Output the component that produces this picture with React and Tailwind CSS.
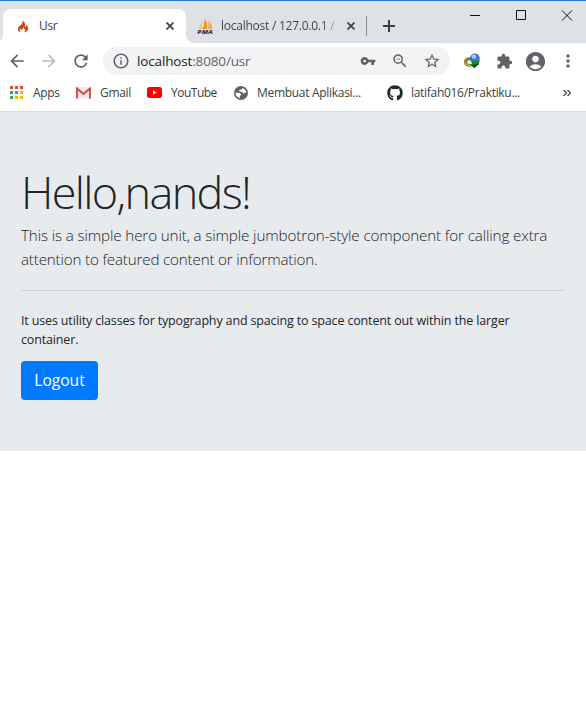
import { MdArrowBack, MdArrowForward, MdRefresh, MdInfoOutline, MdVpnKey, MdZoomOut, MdStarBorder, MdExtension, MdAccountCircle, MdMoreVert } from 'react-icons/md';
import { FaGithub } from 'react-icons/fa';

function Flame() {
  return (
    <svg viewBox="0 0 12 13" className="h-[13px] w-3 shrink-0">
      <path d="M5.400 0.500C6.200 2.800 4.800 4 3.400 5.600C1.900 6.300 1 7.500 0.900 9C0.800 10.800 2 12 3.800 12.500C2.500 11.200 2.500 9.600 4 8.200C3.800 9.600 4.600 10.200 5.400 9.600C6.200 8.900 5.600 8 6.100 7C6.500 8.500 8.300 9 8 10.700C7.800 11.700 7.200 12.100 6.600 12.500C9.500 12.200 11.400 10.200 11.100 8C10.900 6.700 10.100 6 9.900 4.800C9.100 5.400 9.300 6.200 8.900 6.800C8.700 7.100 8.100 7 8.100 6.500C8.300 4 8 1.800 5.400 0.500Z" fill="#cf4515" />
    </svg>
  );
}

function PmaLogo() {
  return (
    <svg viewBox="0 0 17 17" className="h-[17px] w-[17px] shrink-0">
      <path d="M4.900 2.500L4.600 11H0.800C2.800 8.500 4.200 6 4.900 2.500Z" fill="#f9bd72" />
      <path d="M7.300 0.800C10.300 4 10.600 8 9.800 11H5.200C7 8 7.800 4.500 7.300 0.800Z" fill="#f7941d" />
      <path d="M11.300 1.800C13.500 4.500 14.600 7.500 15.500 11H10.500C11.700 8 11.800 5 11.300 1.800Z" fill="#f8a94e" />
      <text x="0.3" y="15.500" fontSize="5.700" fontWeight="800" fontStyle="italic" textLength="15.400" lengthAdjust="spacingAndGlyphs" fill="#35365f" className="font-['Open_Sans',sans-serif]">PMA</text>
    </svg>
  );
}

function CloseX({ className }) {
  return (
    <svg viewBox="0 0 8 8" className={className}>
      <path d="M0.500 0.500L7.500 7.500M7.500 0.500L0.500 7.500" stroke="#3c4043" strokeWidth="1.7" fill="none" />
    </svg>
  );
}

function AppsGrid() {
  const colors = ['#ea4335', '#ea4335', '#ea4335', '#34a853', '#2b8cee', '#fbb405', '#34a853', '#fbb405', '#fbb405'];
  return (
    <div className="grid w-[13px] shrink-0 grid-cols-3 gap-[2px]">
      {colors.map((c, i) => <span key={i} className="h-[3px] w-[3px]" style={{ background: c }} />)}
    </div>
  );
}

function Gmail() {
  return (
    <svg viewBox="0 0 15 12" className="h-3 w-[15px] shrink-0">
      <rect x="0.500" width="14" height="11.500" rx="1" fill="#ebebeb" />
      <path d="M1 11.500V1.500L7.500 7L14 1.500V11.500" fill="none" stroke="#d9453a" strokeWidth="1.900" />
    </svg>
  );
}

function YouTube() {
  return (
    <svg viewBox="0 0 15 11" className="h-[11px] w-[15px] shrink-0">
      <rect width="15" height="11" rx="2.500" fill="#f00" />
      <path d="M6 3.300L9.800 5.500L6 7.700Z" fill="#fff" />
    </svg>
  );
}

function SiteGlobe() {
  return (
    <svg viewBox="0 0 14 14" className="h-[14px] w-[14px] shrink-0">
      <circle cx="7" cy="7" r="7" fill="#5f6368" />
      <path d="M8.300 1.900L7.600 3.400L5.400 4L5.200 5.600L8 5.800L9 7.300L12.300 6.800A5.400 5.400 0 0 0 8.300 1.900ZM1.700 6.600L5.800 6.900L7.400 8.600L6 10L5.700 12.200A5.400 5.400 0 0 1 1.700 6.600Z" fill="#fff" />
    </svg>
  );
}

function DownloadGlobe() {
  return (
    <svg viewBox="0 0 16 16" className="h-4 w-4 shrink-0">
      <ellipse cx="5.500" cy="9" rx="5.500" ry="4.800" fill="#d94734" />
      <ellipse cx="6.100" cy="8.600" rx="5.200" ry="4.300" fill="#f1d51b" />
      <ellipse cx="6.300" cy="8.300" rx="5.200" ry="3.700" fill="#2c9a3a" />
      <ellipse cx="6.300" cy="9" rx="3.300" ry="2.100" fill="#e9f0dc" />
      <circle cx="10.900" cy="5.400" r="4.900" fill="#4678c8" />
      <circle cx="10" cy="3.600" r="2.200" fill="#a9cbf3" />
      <path d="M6.500 6C8 8.300 11 8.700 15.600 7L15 11L10.300 15L5.500 11.200L8 11Z" fill="#178a25" />
      <path d="M8 12L10.300 15L15.200 10.800L11.500 11.500Z" fill="#153d1b" />
    </svg>
  );
}

function TabFlare({ className }) {
  return (
    <svg viewBox="0 0 8 8" className={className}>
      <path d="M0 0V8H8A8 8 0 0 1 0 0Z" fill="#fff" />
    </svg>
  );
}

function TabBar() {
  return (
    <div className="relative flex h-[43px] border-t border-[#1c80d8] bg-[#dee1e6]">
      <TabFlare className="absolute bottom-0 left-[186px] h-2 w-2" />
      <TabFlare className="absolute bottom-0 left-[-5px] h-2 w-2 -scale-x-100" />
      <div className="mt-2 ml-[3px] flex h-[34px] w-[183px] shrink-0 items-center rounded-t-lg bg-white pl-[14px]">
        <Flame />
        <span className="ml-[10px] w-[127px] text-xs tracking-[-0.3px] text-[#3c4043]">Usr</span>
        <CloseX className="h-2 w-2 shrink-0" />
      </div>
      <div className="mt-2 flex h-[34px] w-[180px] shrink-0 items-center pl-[11px]">
        <PmaLogo />
        <span className="ml-[7px] w-[126px] overflow-hidden bg-linear-to-r from-[#3c4043] from-80% to-[#dee1e6] to-95% bg-clip-text text-xs tracking-[-0.25px] whitespace-nowrap text-transparent">localhost / 127.0.0.1 / </span>
        <CloseX className="h-2 w-2 shrink-0" />
      </div>
      <div className="mt-[15px] h-5 w-px shrink-0 bg-[#85898d]" />
      <svg viewBox="0 0 12 12" className="mt-[19px] ml-4 h-3 w-3 shrink-0">
        <path d="M6 0V12M0 6H12" stroke="#3c4043" strokeWidth="2" />
      </svg>
      <div className="ml-[75px] flex h-7 items-center">
        <svg viewBox="0 0 104 12" className="h-3 w-[104px] shrink-0">
          <path d="M0 6.500H10M46.500 1.500H55.500V10.500H46.500ZM92 1.500L102 11.500M102 1.500L92 11.500" stroke="#111" fill="none" />
        </svg>
      </div>
    </div>
  );
}

function Toolbar() {
  return (
    <div className="flex h-9 items-center bg-white text-[#5f6368]">
      <MdArrowBack className="ml-[7px] h-5 w-5 shrink-0" />
      <MdArrowForward className="ml-3 h-5 w-5 shrink-0 text-[#bbbdbf]" />
      <MdRefresh className="ml-3 h-5 w-5 shrink-0" />
      <div className="ml-3 flex h-7 w-[347px] shrink-0 items-center rounded-full bg-[#f1f3f4]">
        <MdInfoOutline className="ml-[9px] h-[18px] w-[18px] shrink-0" />
        <span className="ml-[7px] w-[223px] text-[13.5px] tracking-[-0.15px]"><span className="text-[#202124]">localhost</span>:8080/usr</span>
        <MdVpnKey className="h-4 w-4 shrink-0" />
        <MdZoomOut className="ml-[15px] h-[18px] w-[18px] shrink-0" />
        <MdStarBorder className="ml-[14px] h-[18px] w-[18px] shrink-0" />
      </div>
      <div className="ml-[14px]"><DownloadGlobe /></div>
      <MdExtension className="ml-4 h-[17px] w-[17px] shrink-0" />
      <MdAccountCircle className="ml-[11px] h-[23px] w-[23px] shrink-0" />
      <MdMoreVert className="ml-[11px] h-5 w-5 shrink-0" />
    </div>
  );
}

function Bookmarks() {
  return (
    <div className="flex h-[33px] items-center border-b border-[#d9dce0] bg-white pb-[5px] text-xs tracking-[-0.3px] whitespace-nowrap text-[#3c4043]">
      <div className="ml-[10px]"><AppsGrid /></div>
      <span className="ml-[10px] w-[43px]">Apps</span>
      <Gmail />
      <span className="ml-[9px] w-[47px]">Gmail</span>
      <YouTube />
      <span className="ml-[9px] w-[63px] tracking-[-0.5px]">YouTube</span>
      <SiteGlobe />
      <span className="ml-[9px] w-[130px]">Membuat Aplikasi...</span>
      <FaGithub className="h-4 w-4 shrink-0 text-[#24292e]" />
      <span className="ml-2 w-[152px]">latifah016/Praktiku...</span>
      <svg viewBox="0 0 8 6" className="h-[6px] w-2 shrink-0">
        <path d="M0.500 0L3.500 3L0.500 6M4.500 0L7.500 3L4.500 6" stroke="#4b4f53" strokeWidth="1.400" fill="none" />
      </svg>
    </div>
  );
}

export default function App() {
  return (
    <div className="h-[727px] w-[586px] overflow-hidden bg-white font-['Open_Sans','Noto_Sans',sans-serif]">
      <TabBar />
      <Toolbar />
      <Bookmarks />
      <main className="h-[339px] bg-[#e8ebee] px-[21px] pt-[51px] text-[#212529]">
        <h1 className="text-[45px] leading-[58px] font-light tracking-[-1.65px] whitespace-nowrap">Hello,nands!</h1>
        <p className="mt-[2px] text-[15.2px] leading-6 font-light tracking-[-0.13px] whitespace-nowrap">This is a simple hero unit, a simple jumbotron-style component for calling extra<br /><span className="tracking-[-0.18px]">attention to featured content or information.</span></p>
        <hr className="mt-[19px] mr-px border-[#cfd3d6]" />
        <p className="mt-5 text-[12.5px] leading-[19px] tracking-[-0.15px] whitespace-nowrap">It uses utility classes for typography and spacing to space content out within the larger<br />container.</p>
        <button className="mt-3 h-[39px] w-[77px] rounded-[4px] bg-[#007bff] text-[15.6px] text-white">Logout</button>
      </main>
    </div>
  );
}
